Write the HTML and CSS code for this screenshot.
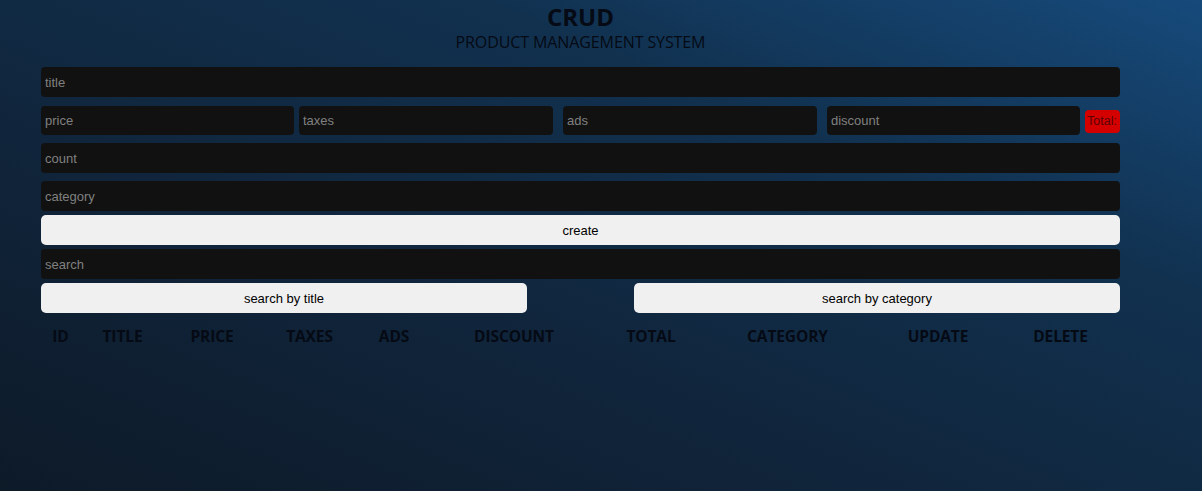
FILE: index.html
```html
<!DOCTYPE html>
<html lang="en">
<head>
<meta charset="utf-8">
<title>CRUD</title>
<link rel="stylesheet" href="styles.css">
</head>
<body>
<div class="crud">
  <div class="head">
    <h2>CRUD</h2>
    <p>PRODUCT MANAGEMENT SYSTEM</p>
  </div>
  <div class="inputs">
    <input class="field" type="text" placeholder="title">
    <div class="price">
      <input class="field p1" type="number" placeholder="price">
      <input class="field p2" type="number" placeholder="taxes">
      <input class="field p3" type="number" placeholder="ads">
      <input class="field p4" type="number" placeholder="discount">
      <small class="total">Total:</small>
    </div>
    <input class="field" type="number" placeholder="count">
    <input class="field cat" type="text" placeholder="category">
    <button class="btn create">create</button>
  </div>
  <div class="search-block">
    <input class="field search" type="text" placeholder="search">
    <div class="btn-search">
      <button class="btn half">search by title</button>
      <button class="btn half">search by category</button>
    </div>
  </div>
  <div class="outputs">
    <table>
      <tr>
        <th class="c1">ID</th>
        <th class="c2">TITLE</th>
        <th class="c3">PRICE</th>
        <th class="c4">TAXES</th>
        <th class="c5">ADS</th>
        <th class="c6">DISCOUNT</th>
        <th class="c7">TOTAL</th>
        <th class="c8">CATEGORY</th>
        <th class="c9">UPDATE</th>
        <th class="c10">DELETE</th>
      </tr>
    </table>
  </div>
</div>
</body>
</html>
```

FILE: styles.css
```css
* { box-sizing: border-box; }
html, body { height: 100%; }
body {
  margin: 0;
  background: linear-gradient(to top right, #0d1a28 0%, #10243a 35%, #11314f 70%, #164a7b 100%);
  font-family: "Open Sans", "Noto Sans", sans-serif;
  color: #000;
}
.crud {
  width: 1079px;
  margin-left: 41px;
}
.head {
  text-align: center;
  padding-top: 3px;
  height: 67px;
}
.head h2 {
  margin: 0;
  font-size: 24px;
  font-weight: 700;
  line-height: 28px;
  color: #050a14;
}
.head p {
  margin: 0;
  font-size: 16px;
  line-height: 22px;
  color: #050a14;
  letter-spacing: -0.1px;
}
.field {
  display: block;
  width: 100%;
  height: 30px;
  border: none;
  outline: none;
  border-radius: 4px;
  background: #111;
  color: #ccc;
  font-family: "Liberation Sans", Arial, sans-serif;
  font-size: 13px;
  padding: 0 4px;
  margin-bottom: 8px;
}
.field::placeholder { color: #808080; }
.price {
  display: flex;
  align-items: center;
  margin-bottom: 8px;
  height: 30px;
}
.price .field { margin-bottom: 0; height: 29px; width: 254px; flex: none; }
.price .p1 { width: 253px; margin-right: 5px; }
.price .p2 { width: 254px; margin-right: 10px; }
.price .p3 { width: 254px; margin-right: 10px; }
.price .p4 { width: 253px; margin-right: 5px; }
.total {
  display: flex;
  align-items: center;
  justify-content: flex-start;
  width: 35px;
  height: 23px;
  background: #d40000;
  border-radius: 4px;
  color: #5c0000;
  font-family: "Liberation Sans", Arial, sans-serif;
  font-size: 12.5px;
  overflow: hidden;
  white-space: nowrap;
  padding-left: 2px;
  margin-top: 2px;
}
.cat { margin-bottom: 4px; }
.btn {
  display: block;
  width: 100%;
  height: 30px;
  border: none;
  border-radius: 5px;
  background: #f0f0f0;
  color: #000;
  font-family: "Liberation Sans", Arial, sans-serif;
  font-size: 13px;
  cursor: pointer;
}
.create { margin-bottom: 4px; }
.search { margin-bottom: 4px; }
.btn-search {
  display: flex;
  justify-content: space-between;
}
.btn-search .half { width: 486px; }
.outputs { margin-top: 12px; }
table {
  width: 1077px;
  border-collapse: collapse;
  table-layout: fixed;
}
th {
  padding: 0;
  text-align: center;
  font-size: 15.5px;
  font-weight: 700;
  line-height: 22px;
  color: #050a14;
  letter-spacing: -0.1px;
}
.c1 { width: 39px; }
.c2 { width: 85px; }
.c3 { width: 94px; }
.c4 { width: 101px; }
.c5 { width: 68px; }
.c6 { width: 172px; }
.c7 { width: 102px; }
.c8 { width: 171px; }
.c9 { width: 130px; }
.c10 { width: 115px; }
```
